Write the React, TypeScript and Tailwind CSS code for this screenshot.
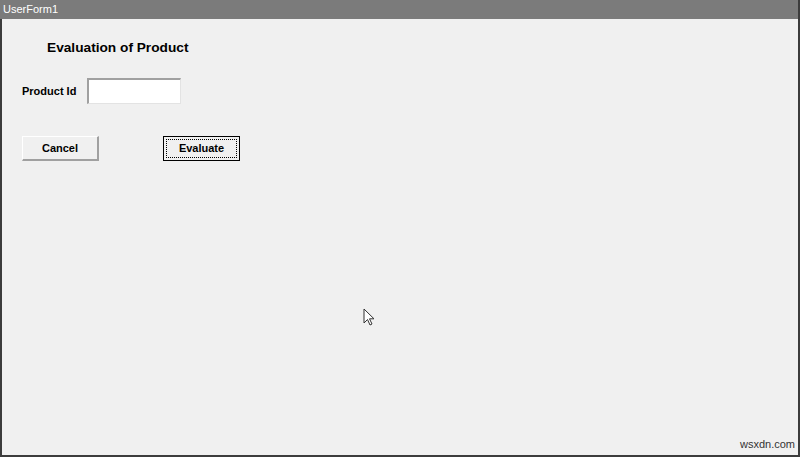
export default function App() {
  return (
    <div className="relative flex h-[457px] w-[800px] flex-col overflow-hidden border-r-2 border-b-2 border-[#3c3c3c] bg-[#f0f0f0] font-['Liberation_Sans',Arial,sans-serif]">
      {/* title bar */}
      <div className="flex h-[19px] shrink-0 items-center bg-[#7b7b7b] pl-[3px] text-[11px] text-white">
        UserForm1
      </div>

      <div className="flex flex-1 flex-col border-l-2 border-[#3c3c3c] pl-[20px]">
        <h1 className="ml-[25px] mt-[21px] text-[13.7px] font-bold leading-[16px] text-black">
          Evaluation of Product
        </h1>

        <div className="mt-[22px] flex items-center">
          <span className="w-[65px] text-[11px] font-bold text-black">Product Id</span>
          <input
            className="h-[26px] w-[94px] border-t-2 border-l-2 border-b border-r border-t-[#a0a0a0] border-l-[#a0a0a0] border-b-[#e3e3e3] border-r-[#e3e3e3] bg-white outline-none"
            type="text"
          />
        </div>

        <div className="mt-[32px] flex items-center">
          <button className="h-[25px] w-[77px] border border-t-white border-l-white border-b-2 border-r-2 border-b-[#a0a0a0] border-r-[#a0a0a0] bg-[#f0f0f0] text-[11px] font-bold text-black">
            Cancel
          </button>
          <button className="ml-[64px] flex h-[25px] w-[77px] items-center justify-center border border-black bg-[#f0f0f0] p-[2px] text-[11px] font-bold text-black">
            <span className="flex h-full w-full items-center justify-center border border-dotted border-black">
              Evaluate
            </span>
          </button>
        </div>
      </div>

      {/* mouse pointer */}
      <svg className="absolute left-[363px] top-[308px]" width="12" height="19" viewBox="0 0 12 19">
        <path d="M1 1 L1 15 L4.5 11.5 L7 17 L9 16 L6.5 10.8 L11 10.8 Z" fill="white" stroke="#333" strokeWidth="1" strokeLinejoin="round" />
      </svg>

      <span className="absolute bottom-[3px] right-[3px] text-[11px] text-[#333]">wsxdn.com</span>
    </div>
  );
}
